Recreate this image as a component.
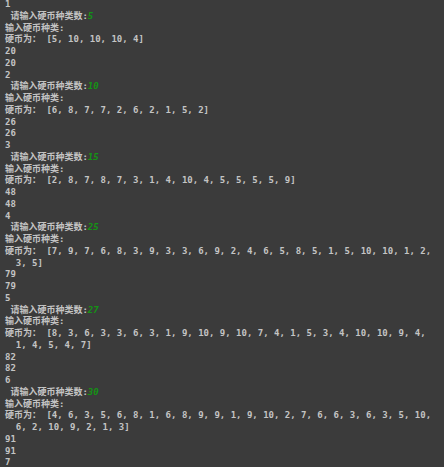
const runs = [
  { n: 1, k: "5", coins: ["[5, 10, 10, 10, 4]"], ans: "20" },
  { n: 2, k: "10", coins: ["[6, 8, 7, 7, 2, 6, 2, 1, 5, 2]"], ans: "26" },
  { n: 3, k: "15", coins: ["[2, 8, 7, 8, 7, 3, 1, 4, 10, 4, 5, 5, 5, 5, 9]"], ans: "48" },
  {
    n: 4,
    k: "25",
    coins: ["[7, 9, 7, 6, 8, 3, 9, 3, 3, 6, 9, 2, 4, 6, 5, 8, 5, 1, 5, 10, 10, 1, 2,", "  3, 5]"],
    ans: "79",
  },
  {
    n: 5,
    k: "27",
    coins: ["[8, 3, 6, 3, 3, 6, 3, 1, 9, 10, 9, 10, 7, 4, 1, 5, 3, 4, 10, 10, 9, 4,", "  1, 4, 5, 4, 7]"],
    ans: "82",
  },
  {
    n: 6,
    k: "30",
    coins: ["[4, 6, 3, 5, 6, 8, 1, 6, 8, 9, 9, 1, 9, 10, 2, 7, 6, 6, 3, 6, 3, 5, 10,", "  6, 2, 10, 9, 2, 1, 3]"],
    ans: "91",
  },
];

export default function App() {
  return (
    <div className="w-[444px] h-[468px] overflow-hidden bg-[#3b3b3b] text-[#c4c4c4] font-['DejaVu_Sans_Mono','Noto_Sans_CJK_SC',monospace] text-[9px] leading-[11.75px] font-bold whitespace-pre pl-[5px] -mt-[1px]">
      {runs.map((r) => (
        <div key={r.n}>
          <div>{r.n}</div>
          <div>
            {" 请输入硬币种类数:"}
            <span className="text-[#149414] italic">{r.k}</span>
          </div>
          <div>输入硬币种类:</div>
          {r.coins.map((c, i) => (
            <div key={i}>{i === 0 ? "硬币为： " + c : c}</div>
          ))}
          <div>{r.ans}</div>
          <div>{r.ans}</div>
        </div>
      ))}
      <div>7</div>
    </div>
  );
}
